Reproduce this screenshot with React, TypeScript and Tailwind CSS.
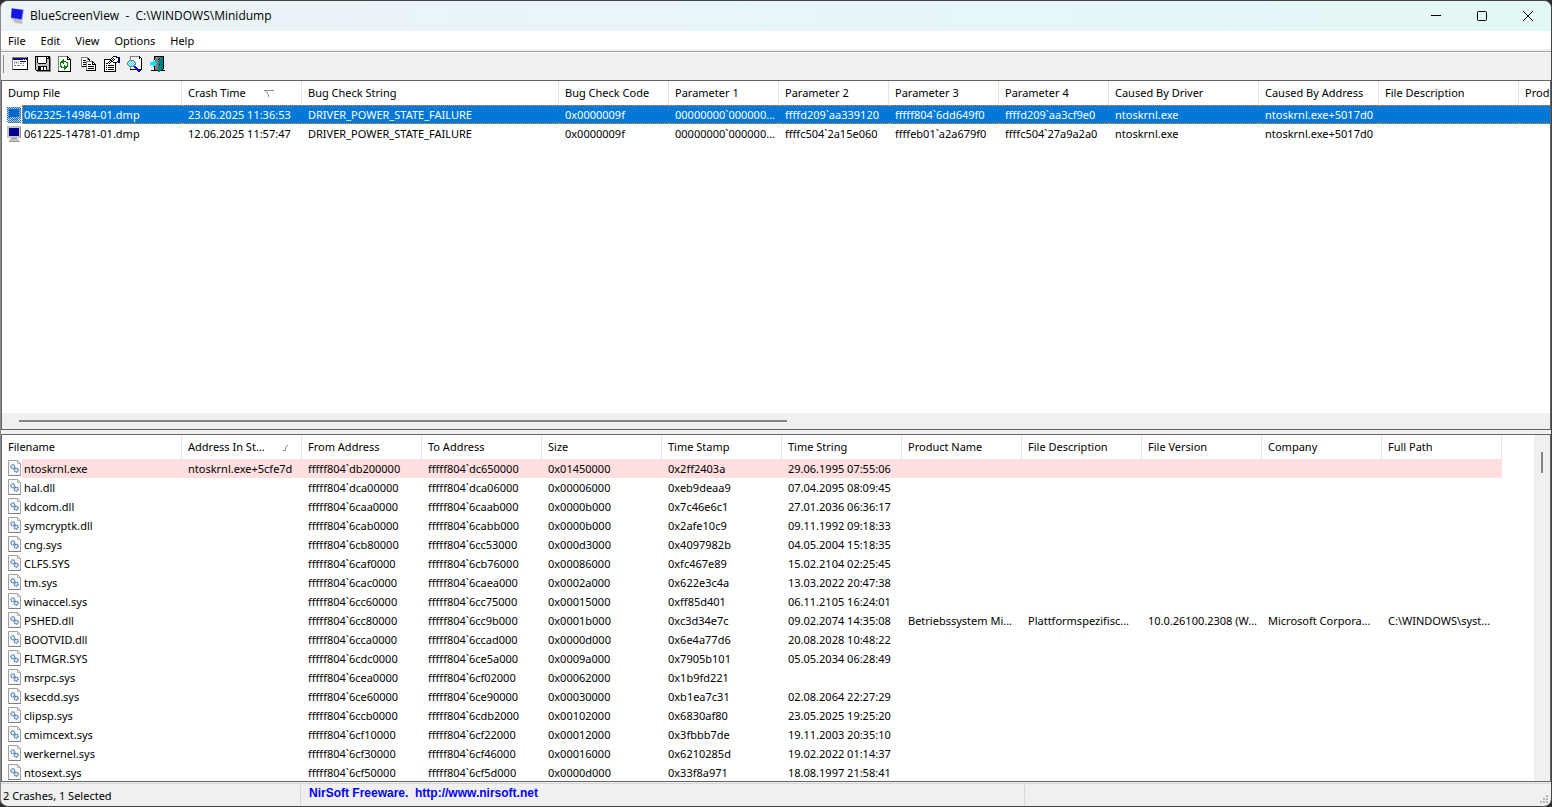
import { useState } from 'react';

const COLORS: Record<string, string> = {
  K: '#000000',
  W: '#ffffff',
  N: '#000080',
  G: '#808080',
  L: '#c0c0c0',
  B: '#0000ff',
  C: '#00e5ff',
  T: '#008080',
  E: '#008000',
};

const ICONS = {
  properties: [
    '................',
    'GGGGGGGGGGGGGGGK',
    'GNNNNNNNNNNNNNNK',
    'GNNNNNNNNNNLNLNK',
    'GWWWWWWWWWWWWWWK',
    'GWLWLWLWNNNNNNWK',
    'GWGLGLWWWWWWWWWK',
    'GWLWLWLWGGWGWWWK',
    'GWWWWWWWWWWWWWWK',
    'GWGGWGGGWWGGWWWK',
    'GWWWWWWWWWWWWWWK',
    'GWWWWWWWWWWWWWWK',
    'GWWWWWWWWWWWWWWK',
    'GKKKKKKKKKKKKKKK',
    '................',
    '................',
  ],
  save: [
    'KKKKKKKKKKKKKKK.',
    'KLKWWWWWWWWKWKKG',
    'KLKWWWWWWWWKKKKG',
    'KLKWWWWWWWWKLLKG',
    'KLKWWWWWWWWKLLKG',
    'KLKWWWWWWWWKLLKG',
    'KLKWWWWWWWWKLLKG',
    'KLLKKKKKKKKLLLKG',
    'KLLLLLLLLLLLLLKG',
    'KLLLLLLLLLLLLLKG',
    'KLLKKKKKKKKKLLKG',
    'KLLKKKWWKWWKLLKG',
    'KLLKKKWWKWWKLLKG',
    'KLLKKKWWKWWKLLKG',
    '.KKKKKKKKKKKKKKG',
    '..GGGGGGGGGGGGGG',
  ],
  refresh: [
    'GGGGGGGGGK......',
    'GWWWWWWWWKK.....',
    'GWWWWWWWWKWK....',
    'GWWWWEWWWKKKK...',
    'GWWWEEWWWWWWK...',
    'GWWEEEEEWWWWK...',
    'GWEEEEWWEEWWK...',
    'GWEWWEWWWEWWK...',
    'GWEWWWWWWEWWK...',
    'GWEWWWEWWEWWK...',
    'GWEEWWEEEEWWK...',
    'GWWEEEEEEWWWK...',
    'GWWWWWEEWWWWK...',
    'GWWWWWEWWWWWK...',
    'GWWWWWWWWWWWK...',
    'KKKKKKKKKKKKK...',
  ],
  copy: [
    '................',
    'GGGGGGG.........',
    'GWWWWWGK........',
    'GWWWWWGKK.......',
    'GWKKKWWWK.......',
    'GWWWWGGGGGGK....',
    'GWKKKGWWWWWKK...',
    'GWWWWGWWWWWKWK..',
    'GWKKKGWKKKWKKKK.',
    'GWWWWGWWWWWWWWK.',
    'GKKKKGWKKKKKKWK.',
    '.....GWWWWWWWWK.',
    '.....GWKKKKKKWK.',
    '.....GWWWWWWWWK.',
    '.....KKKKKKKKKK.',
    '................',
  ],
  options: [
    '.........KKKK...',
    '........KWWWKKNN',
    '.......KWKWWWWNN',
    'KKKKKKKWKWKWWWNN',
    'KWWWWWKKWKWWWWNN',
    'KWWWWKWKKWWWWKNN',
    'KWWWKWKWWKKKK.NN',
    'KWKKWKWWWWWK....',
    'KWWWWWWWWWWK....',
    'KWKWKKKKKKWK....',
    'KWWWWWWWWWWK....',
    'KWKWKKKKKKWK....',
    'KWWWWWWWWWWK....',
    'KWKWKKKKKKWK....',
    'KWWWWWWWWWWK....',
    'KKKKKKKKKKKK....',
  ],
  find: [
    '...GGGGGGGGGK...',
    '...GWWWWWWWWKK..',
    '...GWWWWWWWWKWK.',
    '...GWWWWWWWWWWK.',
    '..GGGGGWWWWWWWK.',
    '.GCWCWCGWWWWWWK.',
    'GCWCWCWCGWWWWWK.',
    'GWCWCWCWGWWWWWK.',
    'GCWCWCWCGWWWWWK.',
    '.GCWCWCGWWWWWWK.',
    '..GGGGGBBWWWWWK.',
    '...GWWWBBBWWWWK.',
    '...GWWWWBBBWWWK.',
    '...KKKKKKBBBKKK.',
    '..........NBBN..',
    '...........NN...',
  ],
  exit: [
    '....KKKKKKKKKK..',
    '....KGGGGGGTTK..',
    '....KGGGGKTTTK..',
    '....KGGGKTTTTK..',
    '...C.GGGTTTTTK..',
    '...CCGGGTTTTTK..',
    'CCCCCCGGTTTTTK..',
    'CCCCCCCGTTTTTK..',
    'CCCCCCGGTKTTTK..',
    '...CCGGGTTTTTK..',
    '...CKGGGTTTTTK..',
    '....KGGGTTTTTK..',
    '....KGGGTTTTTK..',
    '....KGGGTTTTK...',
    '.KKKKKKKTTTKKKK.',
    '........TT......',
  ],
};

function PixelIcon({ rows }: { rows: string[] }) {
  return (
    <svg width="16" height="16" viewBox="0 0 16 16" shapeRendering="crispEdges" aria-hidden="true">
      {rows.flatMap((row, y) =>
        row.split('').map((c, x) =>
          c === '.' ? null : <rect key={`${x}-${y}`} x={x} y={y} width="1" height="1" fill={COLORS[c]} />
        )
      )}
    </svg>
  );
}

function AppIcon() {
  return (
    <svg width="16" height="16" viewBox="0 0 16 16" aria-hidden="true">
      <path d="M2 10l4 4 6 2 2-2-3-2z" fill="#b9b5b0" />
      <path d="M2 0l13 1.500-1.500 11L2 10.500z" fill="#a9b4d8" />
      <path d="M3 .5l11 1.500-1.500 9.500L2 9.500z" fill="#1414e6" />
      <path d="M4 13l8 .5.500 2H7z" fill="#c9c5bd" />
    </svg>
  );
}

function MonitorIcon({ selected }: { selected: boolean }) {
  return (
    <svg width="14" height="16" viewBox="0 0 14 16" shapeRendering="crispEdges" className="shrink-0" aria-hidden="true">
      <defs>
        <pattern id="dither" width="2" height="2" patternUnits="userSpaceOnUse">
          <rect width="1" height="1" fill="#0078d7" />
          <rect x="1" y="1" width="1" height="1" fill="#0078d7" />
        </pattern>
      </defs>
      <rect x="0" y="0" width="14" height="12" fill="#c8c4c0" />
      <rect x="13" y="1" width="1" height="11" fill="#909090" />
      <rect x="2" y="2" width="10" height="8" fill={selected ? '#0050c0' : '#000099'} />
      <rect x="4" y="12" width="6" height="1" fill="#909090" />
      <rect x="2" y="13" width="10" height="2" fill="#c8c4c0" />
      <rect x="2" y="15" width="11" height="1" fill="#a0a0a0" />
      {selected && <rect width="14" height="16" fill="url(#dither)" />}
    </svg>
  );
}

function FileIcon() {
  return (
    <svg width="13" height="16" viewBox="0 0 13 16" className="shrink-0" aria-hidden="true">
      <path d="M.5.5h9l3 3v12H.5z" fill="#f8f8f8" stroke="#a0a0a0" />
      <path d="M9.500.5v3h3" fill="none" stroke="#b5b5b5" />
      <path d="M.5 15.500h12" stroke="#808080" />
      <circle cx="4.800" cy="6.800" r="1.900" fill="#e8f1f8" stroke="#3f73a8" strokeWidth="1.200" strokeDasharray="1.200 .5" />
      <circle cx="8.200" cy="10.200" r="1.900" fill="#e8f1f8" stroke="#2f6299" strokeWidth="1.200" strokeDasharray="1.200 .5" />
    </svg>
  );
}

const crashColumns = [
  { label: 'Dump File', width: 180 },
  { label: 'Crash Time', width: 120 },
  { label: 'Bug Check String', width: 257 },
  { label: 'Bug Check Code', width: 110 },
  { label: 'Parameter 1', width: 110 },
  { label: 'Parameter 2', width: 110 },
  { label: 'Parameter 3', width: 110 },
  { label: 'Parameter 4', width: 110 },
  { label: 'Caused By Driver', width: 150 },
  { label: 'Caused By Address', width: 120 },
  { label: 'File Description', width: 140 },
  { label: 'Prod', width: 120 },
];

const crashes = [
  ['062325-14984-01.dmp', '23.06.2025 11:36:53', 'DRIVER_POWER_STATE_FAILURE', '0x0000009f', '00000000`000000...', 'ffffd209`aa339120', 'fffff804`6dd649f0', 'ffffd209`aa3cf9e0', 'ntoskrnl.exe', 'ntoskrnl.exe+5017d0', '', ''],
  ['061225-14781-01.dmp', '12.06.2025 11:57:47', 'DRIVER_POWER_STATE_FAILURE', '0x0000009f', '00000000`000000...', 'ffffc504`2a15e060', 'ffffeb01`a2a679f0', 'ffffc504`27a9a2a0', 'ntoskrnl.exe', 'ntoskrnl.exe+5017d0', '', ''],
];

const driverColumns = [
  'Filename', 'Address In St...', 'From Address', 'To Address', 'Size', 'Time Stamp',
  'Time String', 'Product Name', 'File Description', 'File Version', 'Company', 'Full Path',
];

const drivers = [
  ['ntoskrnl.exe', 'ntoskrnl.exe+5cfe7d', 'fffff804`db200000', 'fffff804`dc650000', '0x01450000', '0x2ff2403a', '29.06.1995 07:55:06'],
  ['hal.dll', '', 'fffff804`dca00000', 'fffff804`dca06000', '0x00006000', '0xeb9deaa9', '07.04.2095 08:09:45'],
  ['kdcom.dll', '', 'fffff804`6caa0000', 'fffff804`6caab000', '0x0000b000', '0x7c46e6c1', '27.01.2036 06:36:17'],
  ['symcryptk.dll', '', 'fffff804`6cab0000', 'fffff804`6cabb000', '0x0000b000', '0x2afe10c9', '09.11.1992 09:18:33'],
  ['cng.sys', '', 'fffff804`6cb80000', 'fffff804`6cc53000', '0x000d3000', '0x4097982b', '04.05.2004 15:18:35'],
  ['CLFS.SYS', '', 'fffff804`6caf0000', 'fffff804`6cb76000', '0x00086000', '0xfc467e89', '15.02.2104 02:25:45'],
  ['tm.sys', '', 'fffff804`6cac0000', 'fffff804`6caea000', '0x0002a000', '0x622e3c4a', '13.03.2022 20:47:38'],
  ['winaccel.sys', '', 'fffff804`6cc60000', 'fffff804`6cc75000', '0x00015000', '0xff85d401', '06.11.2105 16:24:01'],
  ['PSHED.dll', '', 'fffff804`6cc80000', 'fffff804`6cc9b000', '0x0001b000', '0xc3d34e7c', '09.02.2074 14:35:08', 'Betriebssystem Mi...', 'Plattformspezifisc...', '10.0.26100.2308 (W...', 'Microsoft Corpora...', 'C:\\WINDOWS\\syst...'],
  ['BOOTVID.dll', '', 'fffff804`6cca0000', 'fffff804`6ccad000', '0x0000d000', '0x6e4a77d6', '20.08.2028 10:48:22'],
  ['FLTMGR.SYS', '', 'fffff804`6cdc0000', 'fffff804`6ce5a000', '0x0009a000', '0x7905b101', '05.05.2034 06:28:49'],
  ['msrpc.sys', '', 'fffff804`6cea0000', 'fffff804`6cf02000', '0x00062000', '0x1b9fd221', ''],
  ['ksecdd.sys', '', 'fffff804`6ce60000', 'fffff804`6ce90000', '0x00030000', '0xb1ea7c31', '02.08.2064 22:27:29'],
  ['clipsp.sys', '', 'fffff804`6ccb0000', 'fffff804`6cdb2000', '0x00102000', '0x6830af80', '23.05.2025 19:25:20'],
  ['cmimcext.sys', '', 'fffff804`6cf10000', 'fffff804`6cf22000', '0x00012000', '0x3fbbb7de', '19.11.2003 20:35:10'],
  ['werkernel.sys', '', 'fffff804`6cf30000', 'fffff804`6cf46000', '0x00016000', '0x6210285d', '19.02.2022 01:14:37'],
  ['ntosext.sys', '', 'fffff804`6cf50000', 'fffff804`6cf5d000', '0x0000d000', '0x33f8a971', '18.08.1997 21:58:41'],
];

const toolbar = [
  { label: 'Advanced Options', rows: ICONS.properties },
  { label: 'Save Selected Items', rows: ICONS.save },
  { label: 'Refresh', rows: ICONS.refresh },
  { label: 'Copy Selected Items', rows: ICONS.copy },
  { label: 'Properties', rows: ICONS.options },
  { label: 'Find', rows: ICONS.find },
  { label: 'Exit', rows: ICONS.exit },
];

const headCell = 'h-6 overflow-hidden border-r border-[#e5e5e5] px-1.5 text-left font-normal';

function CrashTable() {
  const [selected, setSelected] = useState(0);

  return (
    <table className="w-[1637px] table-fixed border-separate border-spacing-0 whitespace-nowrap">
      <colgroup>
        {crashColumns.map((col) => (
          <col key={col.label} style={{ width: col.width }} />
        ))}
      </colgroup>
      <thead>
        <tr>
          {crashColumns.map((col) => (
            <th key={col.label} scope="col" className={headCell}>
              <span className="flex items-center gap-[18px]">
                {col.label}
                {col.label === 'Crash Time' && (
                  <svg width="11" height="7" viewBox="0 0 11 7" aria-hidden="true">
                    <path d="M0 .5h10M1.500 1l3 3.500V7" fill="none" stroke="#8c8c8c" />
                  </svg>
                )}
              </span>
            </th>
          ))}
        </tr>
      </thead>
      <tbody>
        {crashes.map((crash, i) => {
          const active = i === selected;
          const focus = active
            ? 'border-y border-dotted border-[#ff8728] bg-[#0078d7] text-white'
            : 'border-y border-transparent';
          return (
            <tr key={crash[0]} onClick={() => setSelected(i)}>
              {crash.map((value, j) =>
                j === 0 ? (
                  <td key={j} className="h-[19px] p-0">
                    <div className="flex h-[19px] items-start pl-[5px]">
                      <span className="flex pt-0.5">
                        <MonitorIcon selected={active} />
                      </span>
                      <span className={`ml-px h-[19px] flex-1 border-l pl-px leading-[18px] ${focus}`}>{value}</span>
                    </div>
                  </td>
                ) : (
                  <td key={j} className={`h-[19px] overflow-hidden px-1.5 py-0 leading-[17px] ${focus}`}>
                    {value}
                  </td>
                )
              )}
            </tr>
          );
        })}
      </tbody>
    </table>
  );
}

function DriverTable() {
  return (
    <table className="w-[1500px] table-fixed border-separate border-spacing-0 whitespace-nowrap">
      <colgroup>
        {driverColumns.map((label, i) => (
          <col key={label} className={i === 0 ? 'w-[180px]' : 'w-[120px]'} />
        ))}
      </colgroup>
      <thead>
        <tr>
          {driverColumns.map((label) => (
            <th key={label} scope="col" className={headCell}>
              <span className="flex items-center gap-[18px]">
                {label}
                {label === 'Address In St...' && (
                  <svg width="6" height="7" viewBox="0 0 6 7" className="shrink-0" aria-hidden="true">
                    <path d="M0 6.500h2.500V4L5 .5" fill="none" stroke="#8c8c8c" />
                  </svg>
                )}
              </span>
            </th>
          ))}
        </tr>
      </thead>
      <tbody>
        {drivers.map((driver, i) => {
          // drivers found on the crash stack are marked pink
          const onStack = i === 0 ? 'bg-[#ffdfdf]' : '';
          return (
            <tr key={driver[0]}>
              {driverColumns.map((label, j) =>
                j === 0 ? (
                  <td key={label} className="h-[19px] p-0">
                    <div className="flex h-[19px] items-start pl-1.5">
                      <span className="flex pt-px">
                        <FileIcon />
                      </span>
                      <span className={`ml-px h-[19px] flex-1 pl-0.5 leading-5 ${onStack}`}>{driver[0]}</span>
                    </div>
                  </td>
                ) : (
                  <td key={label} className={`h-[19px] px-1.5 py-0 leading-[19px] ${onStack}`}>
                    {driver[j]}
                  </td>
                )
              )}
            </tr>
          );
        })}
      </tbody>
    </table>
  );
}

export default function App() {
  return (
    <div className="h-screen bg-[#2d2b2b] font-['Noto_Sans','Open_Sans',sans-serif] text-[11px] text-black">
      <div className="flex h-full flex-col overflow-hidden rounded-lg border border-[#444444] border-l-[#8a8a8a] bg-[#f0f0f0]">
        {/* Title bar */}
        <header className="flex h-[30px] shrink-0 items-center bg-linear-to-r from-[#ecf4f6] via-[#e8f5fb] to-[#e2f8f6] pl-2">
          <AppIcon />
          <h1 className="ml-[5px] flex-1 font-['Open_Sans',sans-serif] text-[12px] whitespace-pre">
            {'BlueScreenView  -  C:\\WINDOWS\\Minidump'}
          </h1>
          <button aria-label="Minimize" className="flex h-full w-[46px] items-center justify-center">
            <svg width="12" height="12" viewBox="0 0 12 12" aria-hidden="true">
              <path d="M1 5.500h10" stroke="#000" />
            </svg>
          </button>
          <button aria-label="Maximize" className="flex h-full w-[46px] items-center justify-center">
            <svg width="12" height="12" viewBox="0 0 12 12" aria-hidden="true">
              <rect x="1.500" y="1.500" width="9" height="9" rx="1" fill="none" stroke="#000" />
            </svg>
          </button>
          <button aria-label="Close" className="flex h-full w-[46px] items-center justify-center">
            <svg width="12" height="12" viewBox="0 0 12 12" aria-hidden="true">
              <path d="M1 1l10 10M11 1L1 11" stroke="#000" />
            </svg>
          </button>
        </header>

        {/* Menu */}
        <nav className="flex h-5 shrink-0 items-end gap-px border-b-2 border-[#f0f0f0] bg-white leading-4">
          {['File', 'Edit', 'View', 'Options', 'Help'].map((item) => (
            <button key={item} className="px-[7px]">
              {item}
            </button>
          ))}
        </nav>

        {/* Toolbar */}
        <div className="flex h-[29px] shrink-0 items-center border-t border-[#a0a0a0] pb-1 pl-0.5 shadow-[inset_0_1px_0_#ffffff]">
          <span className="mr-1 h-[18px] w-px bg-[#8c8c8c]" />
          {toolbar.map(({ label, rows }) => (
            <button key={label} aria-label={label} title={label} className="flex h-6 w-[23px] items-center justify-center">
              <PixelIcon rows={rows} />
            </button>
          ))}
        </div>

        {/* Crash list */}
        <section className="flex h-[350px] shrink-0 flex-col overflow-hidden border border-[#646464] bg-white">
          <div className="min-h-0 flex-1 overflow-hidden">
            <CrashTable />
          </div>
          <div className="flex h-4 shrink-0 items-center bg-[#f0f0f0] px-[17px]">
            <div className="h-0.5 w-[768px] bg-[#858585]" />
          </div>
        </section>

        {/* Driver list */}
        <section className="mt-1 flex min-h-0 flex-1 overflow-hidden border border-[#646464] bg-white">
          <div className="min-w-0 flex-1 overflow-hidden">
            <DriverTable />
          </div>
          <div className="flex w-4 shrink-0 justify-center bg-[#f0f0f0] pt-[17px]">
            <div className="h-[21px] w-0.5 bg-[#858585]" />
          </div>
        </section>

        {/* Status bar */}
        <footer className="mt-px flex h-[23px] shrink-0 items-stretch border-t border-[#d7d7d7] pt-px">
          <span className="flex w-[300px] items-center border-r border-[#d7d7d7] pt-0.5 pl-0.5">2 Crashes, 1 Selected</span>
          <span className="w-[724px] border-r border-[#d7d7d7] pl-2 font-['Liberation_Sans',sans-serif] text-[12px] leading-[17px] font-bold">
            <a href="http://www.nirsoft.net" className="whitespace-pre text-[#0000ff]">
              {'NirSoft Freeware.  http://www.nirsoft.net'}
            </a>
          </span>
          <span className="flex flex-1 items-end justify-end">
            <svg width="12" height="12" viewBox="0 0 12 12" fill="#b8b8b8" shapeRendering="crispEdges" aria-hidden="true">
              <path d="M7 1h2v2H7zM4 4h2v2H4zM7 4h2v2H7zM1 7h2v2H1zM4 7h2v2H4zM7 7h2v2H7z" />
            </svg>
          </span>
        </footer>
      </div>
    </div>
  );
}
